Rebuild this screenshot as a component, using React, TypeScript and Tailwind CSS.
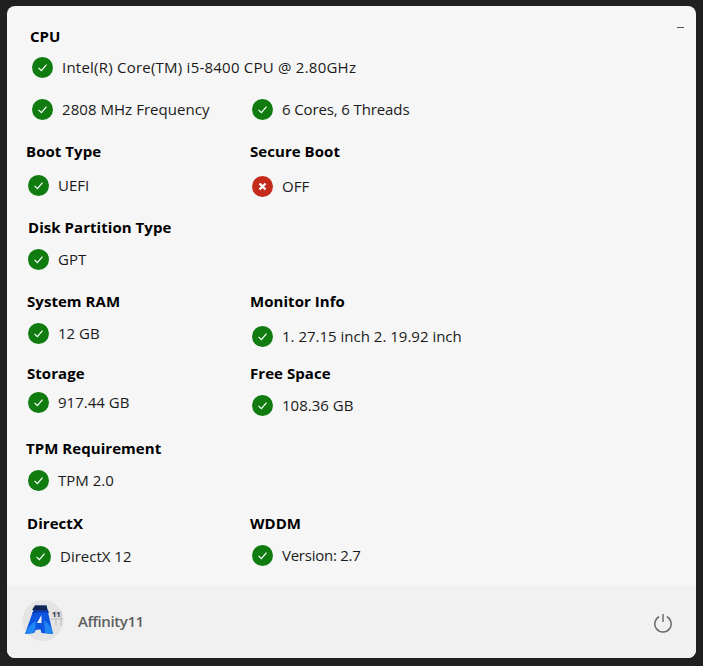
function Check() {
  return (
    <svg width="21" height="21" viewBox="0 0 21 21" className="shrink-0">
      <circle cx="10.5" cy="10.5" r="10.5" fill="#107c10" />
      <path d="M6.5 10.8l2.9 2.9 5.1-6" fill="none" stroke="#fff" strokeWidth="1.2" />
    </svg>
  );
}

function Cross() {
  return (
    <svg width="21" height="21" viewBox="0 0 21 21" className="shrink-0">
      <circle cx="10.5" cy="10.5" r="10.5" fill="#c42b1c" />
      <path d="M7.5 7.5l6 6M13.5 7.5l-6 6" fill="none" stroke="#fff" strokeWidth="2.4" />
    </svg>
  );
}

function Status({ text, bad, className }: { text: string; bad?: boolean; className?: string }) {
  return (
    <div className={`flex h-[22px] items-center gap-[9px] text-[15px] text-[#1a1a1a] ${className ?? ''}`}>
      {bad ? <Cross /> : <Check />}
      <span className="whitespace-nowrap">{text}</span>
    </div>
  );
}

function Heading({ text, className }: { text: string; className?: string }) {
  return <div className={`h-5 text-[15px] leading-5 font-bold tracking-[0.05px] text-black ${className ?? ''}`}>{text}</div>;
}

function Logo() {
  return (
    <svg width="43" height="43" viewBox="0 0 43 43" className="shrink-0">
      <circle cx="21" cy="20.5" r="20.5" fill="#e4e4e4" />
      <path d="M29 19h12M34 11v15M39 11v15" stroke="#bdbdbd" strokeWidth="1" fill="none" />
      <path d="M13 5.5h11.5L31 34l-11.5-1-1-3.5-4.5.3-2 3.2-9 1z" fill="#0d55e0" />
      <path d="M13 5.5h11.5l1 4.5H10z" fill="#10244f" />
      <path d="M12 10h14l1 3c-6-1.500-11-1-17 1z" fill="#0b3aa8" />
      <path d="M3 34c3-7 7-11 11-13l-1 9-2 3zM22 20c3 3 6 5 7.500 8l1.500 6-8-1z" fill="#1f86f5" />
      <path d="M15 23l4.500-8v8z" fill="#f4f4f4" />
      <text x="30" y="16.500" fontSize="7.5" fontWeight="700" fill="#26324a" fontFamily="'Open Sans', sans-serif">11</text>
    </svg>
  );
}

export default function App() {
  return (
    <div className="h-[666px] w-[703px] bg-[#202020] px-[7px] pt-[6px] pb-2 font-['Open_Sans',sans-serif]">
      <div className="relative flex h-[652px] flex-col overflow-hidden rounded-lg bg-[#f6f6f6]">
        <div className="absolute top-[21px] right-[12px] h-px w-[7px] bg-[#555]" />
        <div className="flex-1 pt-5">
          <Heading text="CPU" className="ml-[23px]" />
          <Status text="Intel(R) Core(TM) i5-8400 CPU @ 2.80GHz" className="mt-[10px] ml-[25px] tracking-[0.23px]" />
          <div className="mt-5 grid grid-cols-[220px_1fr] pl-[25px]">
            <Status text="2808 MHz Frequency" className="tracking-[0.05px]" />
            <Status text="6 Cores, 6 Threads" className="tracking-[-0.12px]" />
          </div>
          <div className="mt-[21px] grid grid-cols-[243px_1fr]">
            <div className="pl-[19px]">
              <Heading text="Boot Type" />
              <Status text="UEFI" className="mt-[13px] ml-[2px]" />
            </div>
            <div>
              <Heading text="Secure Boot" />
              <Status text="OFF" bad className="mt-[14px] ml-[2px]" />
            </div>
          </div>
          <div className="mt-5 pl-[21px]">
            <Heading text="Disk Partition Type" />
            <Status text="GPT" className="mt-[11px]" />
          </div>
          <div className="mt-[21px] grid grid-cols-[243px_1fr]">
            <div className="pl-5">
              <Heading text="System RAM" />
              <Status text="12 GB" className="mt-[11px] ml-px" />
            </div>
            <div>
              <Heading text="Monitor Info" />
              <Status text="1. 27.15 inch 2. 19.92 inch" className="mt-[14px] ml-[2px]" />
            </div>
          </div>
          <div className="mt-[13px] grid grid-cols-[243px_1fr]">
            <div className="pt-[3px] pl-5">
              <Heading text="Storage" />
              <Status text="917.44 GB" className="mt-[8px] ml-px" />
            </div>
            <div className="pt-[3px]">
              <Heading text="Free Space" />
              <Status text="108.36 GB" className="mt-[11px] ml-[2px]" />
            </div>
          </div>
          <div className="mt-[22px] pl-[19px]">
            <Heading text="TPM Requirement" />
            <Status text="TPM 2.0" className="mt-[11px] ml-[2px]" />
          </div>
          <div className="mt-[22px] grid grid-cols-[243px_1fr]">
            <div className="pl-5">
              <Heading text="DirectX" />
              <Status text="DirectX 12" className="mt-3 ml-[3px] gap-[7px]" />
            </div>
            <div>
              <Heading text="WDDM" />
              <Status text="Version: 2.7" className="mt-[11px] ml-[2px] tracking-[-0.25px]" />
            </div>
          </div>
        </div>
        <div className="flex h-[73px] items-center bg-[#f1f1f1] pr-[22px] pl-[15px]">
          <Logo />
          <span className="ml-[13px] text-[15px] font-semibold tracking-[-0.4px] text-[#5f5f5f]">Affinity11</span>
          <svg width="20" height="20" viewBox="0 0 20 20" className="mt-[3px] mr-px ml-auto">
            <path d="M6.2 3.6a8.2 8.2 0 1 0 7.6 0M10 1v8" fill="none" stroke="#666" strokeWidth="1.4" />
          </svg>
        </div>
      </div>
    </div>
  );
}
